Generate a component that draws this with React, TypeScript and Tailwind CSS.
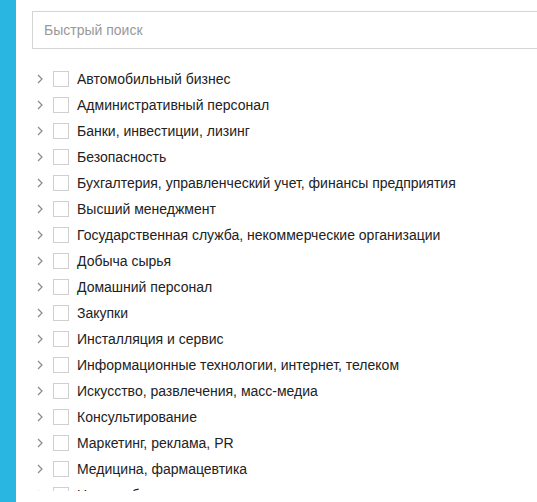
import React from 'react';

const items = [
  'Автомобильный бизнес',
  'Административный персонал',
  'Банки, инвестиции, лизинг',
  'Безопасность',
  'Бухгалтерия, управленческий учет, финансы предприятия',
  'Высший менеджмент',
  'Государственная служба, некоммерческие организации',
  'Добыча сырья',
  'Домашний персонал',
  'Закупки',
  'Инсталляция и сервис',
  'Информационные технологии, интернет, телеком',
  'Искусство, развлечения, масс-медиа',
  'Консультирование',
  'Маркетинг, реклама, PR',
  'Медицина, фармацевтика',
  'Наука, образование',
  'Начало карьеры, студенты',
];

const Chevron = () => (
  <svg width="6" height="10" viewBox="0 0 6 10" className="shrink-0">
    <polyline points="1,1 5,5 1,9" fill="none" stroke="#8a8a8a" strokeWidth="1.2" />
  </svg>
);

const App: React.FC = () => {
  return (
    <div className="flex h-[502px] w-[537px] overflow-hidden bg-white" style={{ fontFamily: '"Liberation Sans", Arial, sans-serif' }}>
      <div className="w-4 shrink-0 bg-[#29b6e0]" />
      <div className="flex-1 pl-4 pt-[11px]">
        <input
          placeholder="Быстрый поиск"
          className="h-[38px] w-[520px] border border-[#d4d4d4] px-[11px] text-[14px] text-[#333] outline-none placeholder:text-[#999]"
        />
        <ul className="mt-[17px] h-[425px] overflow-hidden">
          {items.map(item => (
            <li key={item} className="flex h-[26px] items-center">
              <span className="ml-[5px] flex w-[6px] items-center"><Chevron /></span>
              <span className="ml-[10px] h-4 w-4 shrink-0 border border-[#d0d0d0] bg-white" />
              <span className="ml-[8px] text-[14px] text-[#222]">{item}</span>
            </li>
          ))}
        </ul>
      </div>
    </div>
  );
};

export default App;
